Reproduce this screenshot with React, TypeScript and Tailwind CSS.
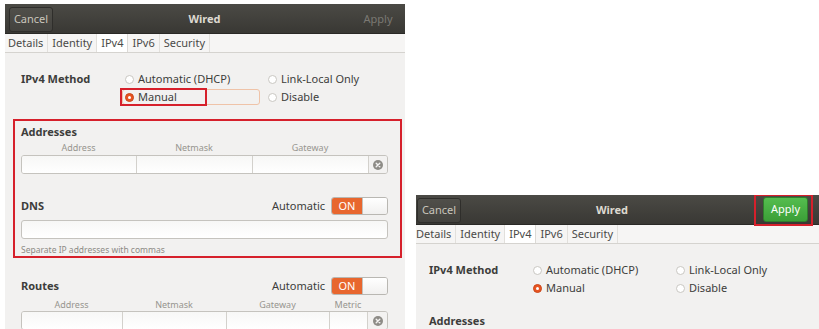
import React from 'react'

type Variant = 'left' | 'right'

function Radio({ label, checked }: { label: string; checked?: boolean }) {
  return (
    <div className="flex items-center h-[18px] gap-[4px]">
      {checked ? (
        <span className="w-[9px] h-[9px] rounded-full bg-[#e95420] border border-[#c9481b] flex items-center justify-center">
          <span className="w-[3px] h-[3px] rounded-full bg-white" />
        </span>
      ) : (
        <span className="w-[9px] h-[9px] rounded-full bg-white border border-[#c9c7c2]" />
      )}
      <span>{label}</span>
    </div>
  )
}

function ClearIcon() {
  return (
    <svg width="10" height="10" viewBox="0 0 10 10">
      <circle cx="5" cy="5" r="5" fill="#8e8c87" />
      <path d="M3.2 3.2 L6.8 6.8 M6.8 3.2 L3.2 6.8" stroke="#f4f3f2" strokeWidth="1.4" strokeLinecap="round" />
    </svg>
  )
}

function Switch() {
  return (
    <div className="flex w-[57px] h-[18px] rounded-[3px] border border-[#b9b7b2] overflow-hidden">
      <div className="w-[30px] bg-[#e8662e] text-white flex items-center justify-center text-[11px]">ON</div>
      <div className="flex-1 bg-gradient-to-b from-white to-[#f1f0ef] border-l border-[#c4c2bd]" />
    </div>
  )
}

function ColumnHeads({ cols, labels }: { cols: string; labels: string[] }) {
  return (
    <div className={`grid ${cols} h-[12px] text-[9px] leading-[12px] text-[#97958f]`}>
      {labels.map((l) => (
        <div key={l} className="text-center">
          {l}
        </div>
      ))}
      <div />
    </div>
  )
}

function EntryRow({ cols, count }: { cols: string; count: number }) {
  return (
    <div className={`grid ${cols} h-[19px] rounded-[3px] border border-[#c5c3be] overflow-hidden`}>
      {Array.from({ length: count }).map((_, i) => (
        <div key={i} className="bg-gradient-to-b from-[#f7f7f6] to-white border-r border-[#d3d1cc]" />
      ))}
      <div className="bg-[#f3f2f1] flex items-center justify-center">
        <ClearIcon />
      </div>
    </div>
  )
}

function Panel({ variant }: { variant: Variant }) {
  const left = variant === 'left'
  return (
    <div className="w-full text-[11px] text-[#3d3d3b]">
      {/* header bar */}
      <div
        className={`h-[30px] flex items-center justify-between pl-[4px] bg-gradient-to-b from-[#4b4a45] to-[#393834] border-b border-[#2a2926] ${
          left ? 'pr-[5px]' : 'pr-[11px]'
        }`}
      >
        <div className="w-[44px] h-[25px] mt-[2px] rounded-[3px] bg-gradient-to-b from-[#504f4a] to-[#43423e] border border-[#2f2e2b] text-[#c9c5bc] flex items-center justify-center">
          Cancel
        </div>
        <div className="font-bold text-[#dedad1] mt-[2px]">Wired</div>
        {left ? (
          <div className="w-[44px] h-[25px] mt-[2px] text-[#7b7973] flex items-center justify-center">Apply</div>
        ) : (
          <div className="relative w-[45px] h-[25px] rounded-[3px] bg-gradient-to-b from-[#55bd4f] to-[#3b9f37] border border-[#2f7f2c] text-white flex items-center justify-center">
            Apply
            <div className="absolute -left-[10px] -right-[6px] -top-[4px] -bottom-[5px] border-2 border-[#d6202b]" />
          </div>
        )}
      </div>

      {/* tabs */}
      <div className="h-[19px] flex bg-[#f6f5f4] border-b border-[#d5d3cf] text-[#4a4a48]">
        <div className="pl-[3px] pr-[4px] flex items-center border-r border-[#e2e0dc]">Details</div>
        <div className="px-[4px] flex items-center border-r border-[#e2e0dc]">Identity</div>
        <div className="px-[4px] flex items-center bg-white border-r border-[#dcdad6]">IPv4</div>
        <div className="px-[4px] flex items-center border-r border-[#e2e0dc]">IPv6</div>
        <div className="px-[4px] flex items-center border-r border-[#e2e0dc]">Security</div>
      </div>

      {/* body */}
      <div className="bg-[#f2f1f0] pl-[16px] pr-[17px] pt-[17px] pb-[20px]">
        <div className="flex">
          <div className="w-[104px] h-[18px] flex items-center font-bold">IPv4 Method</div>
          <div className="grid grid-cols-[143px_1fr] grid-rows-[18px_18px]">
            <Radio label="Automatic (DHCP)" />
            <Radio label="Link-Local Only" />
            <div className="relative">
              {left && (
                <>
                  <div className="absolute -left-[3px] top-[1px] w-[138px] h-[16px] rounded-[3px] border border-[#efc3a8]" />
                  <div className="absolute -left-[5px] top-0 w-[87px] h-[18px] border-2 border-[#d6202b]" />
                </>
              )}
              <div className="relative">
                <Radio label="Manual" checked />
              </div>
            </div>
            <Radio label="Disable" />
          </div>
        </div>

        {left ? (
          <>
            <div className="mt-[13px] -ml-[8px] -mr-[14px] pl-[6px] pr-[12px] pt-[4px] pb-[1px] border-2 border-[#d6202b]">
              <div className="h-[14px] leading-[14px] font-bold">Addresses</div>
              <div className="mt-[3px]">
                <ColumnHeads cols="grid-cols-[115px_116px_116px_1fr]" labels={['Address', 'Netmask', 'Gateway']} />
              </div>
              <div className="mt-[1px]">
                <EntryRow cols="grid-cols-[115px_116px_116px_1fr]" count={3} />
              </div>

              <div className="mt-[23px] h-[18px] flex items-center justify-between">
                <div className="font-bold">DNS</div>
                <div className="flex items-center gap-[6px]">
                  <span>Automatic</span>
                  <Switch />
                </div>
              </div>
              <div className="mt-[5px] h-[19px] rounded-[3px] border border-[#c5c3be] bg-gradient-to-b from-[#f7f7f6] to-white" />
              <div className="mt-[6px] h-[10px] leading-[10px] text-[8.5px] text-[#8d8b86]">
                Separate IP addresses with commas
              </div>
            </div>

            <div className="mt-[19px] h-[18px] flex items-center justify-between">
              <div className="font-bold">Routes</div>
              <div className="flex items-center gap-[6px]">
                <span>Automatic</span>
                <Switch />
              </div>
            </div>
            <div className="mt-[4px]">
              <ColumnHeads cols="grid-cols-[101px_104px_103px_38px_1fr]" labels={['Address', 'Netmask', 'Gateway', 'Metric']} />
            </div>
            <EntryRow cols="grid-cols-[101px_104px_103px_38px_1fr]" count={4} />
          </>
        ) : (
          <div className="mt-[17px] h-[14px] leading-[14px] font-bold">Addresses</div>
        )}
      </div>
    </div>
  )
}

export default function App() {
  return (
    <div className="w-[819px] h-[329px] bg-white overflow-hidden flex items-start font-['Noto_Sans',sans-serif]">
      <div className="ml-[5px] mt-[4px] w-[400px] h-[325px] overflow-hidden">
        <Panel variant="left" />
      </div>
      <div className="ml-[11px] mt-[195px] w-[403px] h-[134px] overflow-hidden">
        <div className="-ml-[3px] w-[406px]">
          <Panel variant="right" />
        </div>
      </div>
    </div>
  )
}
